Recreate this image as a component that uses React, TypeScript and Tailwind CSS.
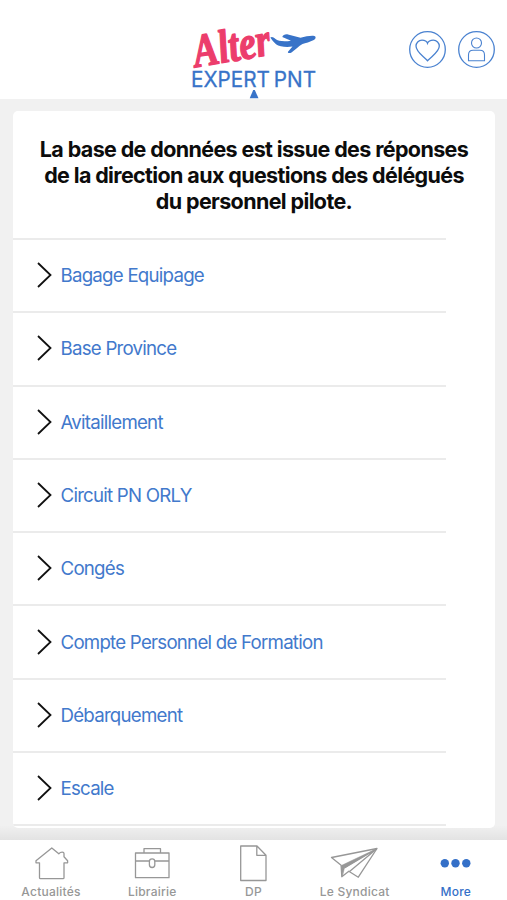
import type { ReactNode } from "react";

const topics = [
    "Bagage Equipage",
    "Base Province",
    "Avitaillement",
    "Circuit PN ORLY",
    "Congés",
    "Compte Personnel de Formation",
    "Débarquement",
    "Escale",
];

function Logo() {
    return (
        <svg width="130" height="84" viewBox="190 15 130 84" className="block overflow-visible">
            <text
                transform="translate(196 67.300) rotate(-9.500) skewX(2)"
                textLength="78"
                lengthAdjust="spacingAndGlyphs"
                fontSize="47"
                fontWeight="700"
                fontStyle="italic"
                fill="#ec3d6c"
                stroke="#ec3d6c"
                strokeWidth="1.400"
                strokeLinejoin="round"
                className="font-['Liberation_Serif',serif]"
            >
                Alter
            </text>
            {/* Plane */}
            <path
                fill="#3873c8"
                d="M270.300 37.500C272 36.300 273.500 37.200 275.200 38.800C278.500 41.400 284 41.800 291 40.800L282.300 37C283 35 285 34 288 34.400L300.500 37.800C305 36.300 310 35.500 313.300 35.700C316.300 35.900 316.300 38.700 313.800 40C310 42 305.500 43.200 302.500 44C299 46 294.500 50.300 291.500 52.400C290 53.400 287.200 53.200 288 51.800L292.500 46.500C286.500 47.400 279.500 46.800 276 44.200C273.500 42 272 40 270.300 37.500Z"
            />
            <text
                x="191"
                y="86.800"
                textLength="125"
                lengthAdjust="spacingAndGlyphs"
                fontSize="21.800"
                fontWeight="400"
                fill="#3873c8"
                stroke="#3873c8"
                strokeWidth="0.300"
                wordSpacing="-2"
                className="font-['Inter',sans-serif]"
            >
                EXPERT PNT
            </text>
            <path fill="#3873c8" d="M253.200 90h1.600l3.700 8.200h-8.800z" />
        </svg>
    );
}

function Header() {
    return (
        <header className="grid h-[99px] shrink-0 grid-cols-[1fr_130px_1fr] bg-white">
            <div />
            <div className="pt-[15px] pl-px">
                <Logo />
            </div>
            <div className="flex justify-end gap-3 pt-[31px] pr-3">
                <svg width="37" height="37" viewBox="0 0 37 37" fill="none" stroke="#4a82d0" strokeWidth="1.300">
                    <circle cx="18.500" cy="18.500" r="17.800" />
                    <path d="M18.500 12.300c-1-3-3.700-3.100-5.500-3.100-3.500 0-6 2.700-6 5.900 0 5.900 7 9.800 11.500 14.700 4.500-4.900 11.800-8.800 11.800-14.700 0-3.200-2.600-5.900-6-5.900-2.300 0-4.800.6-5.800 3.100z" />
                </svg>
                <svg width="37" height="37" viewBox="0 0 37 37" fill="none" stroke="#4a82d0" strokeWidth="1.300">
                    <circle cx="18.500" cy="18.500" r="17.800" />
                    <g strokeWidth="1.100">
                        <circle cx="18.500" cy="12" r="5" />
                        <path d="M10.500 29.800v-5.800c0-3.200 1.800-4.700 4.600-4.700h6.800c2.900 0 4.600 1.500 4.600 4.700v5.800z" />
                    </g>
                </svg>
            </div>
        </header>
    );
}

function TopicRow({ label }: { label: string }) {
    return (
        <div className="flex h-[73.300px] w-[433px] shrink-0 items-center border-t-2 border-[#ebebeb] pl-6">
            <svg width="15" height="26" viewBox="0 0 15 26" fill="none" stroke="#111" strokeWidth="1.800" className="-mt-px">
                <path d="M1 1l12.500 12L1 25" />
            </svg>
            <span className="pt-px pl-[8.500px] text-[18.700px] tracking-[-0.770px] text-[#4279cc]">{label}</span>
        </div>
    );
}

function Tab({ label, active, children }: { label: string; active?: boolean; children: ReactNode }) {
    return (
        <div className={`flex w-[101.200px] flex-col items-center ${active ? "text-[#3470c8]" : "text-[#979797]"}`}>
            <svg width="50" height="40" viewBox="0 0 50 40" fill="none" stroke="currentColor" strokeWidth="1.300" strokeLinejoin="round" className="overflow-visible">
                {children}
            </svg>
            <span className="pt-1 pl-px text-xs leading-4 font-medium tracking-[0.250px] whitespace-nowrap">{label}</span>
        </div>
    );
}

function TabBar() {
    return (
        <nav className="flex h-[60px] shrink-0 bg-white">
            <Tab label="Actualités">
                <path d="M13.500 22.800V37.800c0 .6.400.9 1 .9H37c.6 0 1-.3 1-.9V22.800h3.600v-2L38 16.800v-3.300c0-1.500-3-2-5.200.3L25.800 8 10 20.800v2z" />
            </Tab>
            <Tab label="Librairie">
                <path d="M8.500 13h33.500V37.700H8.500zM17 13V8.700h16.500V13M8.500 21h13.800M28 21h14" />
                <rect x="22.400" y="18.800" width="5.400" height="8.700" rx="2.700" />
            </Tab>
            <Tab label="DP">
                <path d="M12.700 6h16.300l9 9.300V40.500H12.700zM28.800 6v9.300H38" />
            </Tab>
            <Tab label="Le Syndicat">
                <path d="M2.500 17.500L48 8.500 29.300 37.200l-9.500-6-7 5.500-.7-11.500z" />
                <path fill="currentColor" strokeWidth="0.500" d="M47.500 8.800L12.300 25.500l1.300 10.300 1.800-7.800z" />
                <path d="M15.400 28L47.500 9 20.500 31.500" />
            </Tab>
            <Tab label="More" active>
                <g fill="currentColor" stroke="none">
                    <circle cx="14.800" cy="23.300" r="4.200" />
                    <circle cx="25.500" cy="23.300" r="4.200" />
                    <circle cx="36.300" cy="23.300" r="4.200" />
                </g>
            </Tab>
        </nav>
    );
}

export default function App() {
    return (
        <div className="flex h-[900px] w-[507px] flex-col overflow-hidden bg-[#f1f1f1] font-['Inter',sans-serif]">
            <Header />
            <main className="h-[741px] bg-linear-to-b from-[#f1f1f1] from-98% to-[#e3e3e3] pt-3 pl-[13px]">
                <div className="flex h-[717px] w-[482px] flex-col overflow-hidden rounded-[5px] bg-white">
                    <h1 className="h-[127px] shrink-0 pt-[25px] text-center text-[21.500px] leading-[26px] font-bold tracking-[-0.630px] text-[#0c0c0c]">
                        La base de données est issue des réponses
                        <br />
                        de la direction aux questions des délégués
                        <br />
                        du personnel pilote.
                    </h1>
                    {topics.map((topic) => (
                        <TopicRow key={topic} label={topic} />
                    ))}
                    <div className="h-0.5 w-[433px] shrink-0 bg-[#ebebeb]" />
                </div>
            </main>
            <TabBar />
        </div>
    );
}
